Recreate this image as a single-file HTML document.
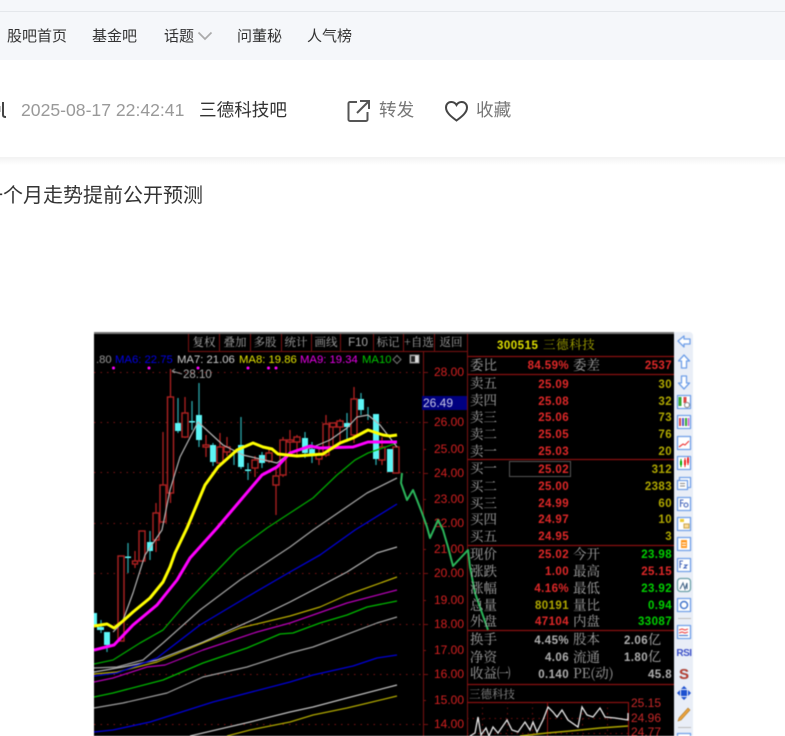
<!DOCTYPE html>
<html lang="zh"><head><meta charset="utf-8"><title>三德科技吧</title>
<style>
html,body{margin:0;padding:0;background:#fff}
body{width:785px;height:736px;overflow:hidden;position:relative;font-family:"Liberation Sans","Noto Sans CJK SC",sans-serif}
.t{position:absolute;white-space:nowrap;line-height:1}
#top{position:absolute;left:0;top:0;width:785px;height:60px;background:#f5f7fa}
#top i{position:absolute;left:0;top:11px;width:785px;height:1px;background:#e4e7eb}
.n{font-size:15px;color:#333;top:29px}
.m{font-size:17.6px;top:102px}
#bar{position:absolute;left:0;top:157px;width:785px;height:8px;background:linear-gradient(#f2f2f2,#fff)}
#chart{position:absolute;left:94px;top:332px;width:600px;height:404px;overflow:hidden;filter:blur(.45px)}
</style></head><body>
<div id="top"><i></i></div>
<span class="t n" style="left:7px">股吧首页</span>
<span class="t n" style="left:92px">基金吧</span>
<span class="t n" style="left:164px">话题</span>
<svg style="position:absolute;left:197px;top:31px" width="16" height="10"><path d="M1.5 1.5L8 8l6.500-6.500" fill="none" stroke="#aaa" stroke-width="1.700"/></svg>
<span class="t n" style="left:237px">问董秘</span>
<span class="t n" style="left:307px">人气榜</span>

<svg style="position:absolute;left:0;top:100px" width="8" height="20"><path d="M3 2v13q0 2 3 2" fill="none" stroke="#444" stroke-width="2"/><path d="M0 6v6" stroke="#888" stroke-width="1"/></svg>
<span class="t m" style="left:21px;color:#999">2025-08-17 22:42:41</span>
<span class="t m" style="left:199px;color:#333">三德科技吧</span>
<svg style="position:absolute;left:347px;top:99px" width="24" height="24" fill="none" stroke="#555" stroke-width="2"><path d="M10 3H3a1.500 1.500 0 0 0-1.500 1.500v16A1.500 1.500 0 0 0 3 22h16a1.500 1.500 0 0 0 1.500-1.500V13"/><path d="M10 14L21 3M13 2h9v8"/></svg>
<span class="t m" style="left:379px;color:#777">转发</span>
<svg style="position:absolute;left:444px;top:99px" width="25" height="24" fill="none" stroke="#444" stroke-width="2"><path d="M12.500 21.500C7 17.500 2 13.500 2 8.500 2 5 4.500 3 7.300 3c2.200 0 4 1 5.200 3 1.200-2 3-3 5.200-3C20.500 3 23 5 23 8.500c0 5-5 9-10.500 13z"/></svg>
<span class="t m" style="left:476px;color:#777">收藏</span>
<div id="bar"></div>
<span class="t" style="left:-17px;top:186px;font-size:20px;color:#333;width:240px">一个月走势提前公开预测</span>

<div id="chart">
<svg width="600" height="404" viewBox="94 332 600 404" xmlns="http://www.w3.org/2000/svg" style="display:block">
<rect x="94" y="332" width="580" height="404" fill="#000"/>
<rect x="94" y="332" width="580" height="2" fill="#777"/>
<!-- sidebar -->
<path d="M674 332h15a4 4 0 0 1 4 4v400h-19z" fill="#e9eef7"/>
<!-- grid -->
<g stroke="#7a1414" stroke-width="1" stroke-dasharray="1.500 5" fill="none">
<path d="M94 372.500H423M94 422.500H423M94 472.500H423M94 523.500H423M94 573.500H423M94 624.500H423M94 674.500H423M94 724.500H423"/>
</g>
<!-- frame -->
<g stroke="#7a1212" stroke-width="1" fill="none">
<path d="M188.500 334v17M219.500 334v17M250.500 334v17M281.500 334v17M311.500 334v17M340.500 334v17M373.500 334v17M403.500 334v17M434.500 334v17M467.500 334v402M188 351.500H467M423.500 351V736"/>
<path d="M423 372.500h5M423 397.500h3M423 422.500h5M423 449.500h3M423 473.500h5M423 499.500h3M423 523.500h5M423 549.500h3M423 573.500h5M423 600.500h3M423 624.500h5M423 650.500h3M423 674.500h5M423 700.500h3M423 724.500h5"/>
</g>
<g stroke="#8a1010" stroke-width="1.200" fill="none">
<path d="M467 356.500H674M467 374.500H674M467 459.500H674M467 545.500H674M467 630.500H674M467 684.500H674M467 702.500H628M628.500 702V736"/>
</g>
<path d="M467 718.500H628M467 733.500H628M482.500 702V736M507.500 702V736M532.500 702V736M582.500 702V736M607.500 702V736" stroke="#701010" stroke-dasharray="1.500 4" fill="none"/>
<path d="M547.500 702V736" stroke="#8a1010" fill="none"/>
<g font-family="'Noto Serif CJK SC',serif" font-size="11.500" fill="#a8a8a8" text-anchor="middle">
<text x="204" y="346">复权</text><text x="235" y="346">叠加</text><text x="265" y="346">多股</text><text x="296" y="346">统计</text><text x="326" y="346">画线</text>
<text x="358" y="346" font-family="'Liberation Sans',sans-serif">F10</text><text x="388" y="346">标记</text><text x="419" y="346">+自选</text><text x="451" y="346">返回</text>
</g>
<g font-size="11.300" font-family="'Liberation Sans',sans-serif">
<text x="96" y="363" fill="#999">.80</text><text x="115" y="363" fill="#0000e8">MA6: 22.75</text><text x="177" y="363" fill="#ccc">MA7: 21.06</text><text x="239" y="363" fill="#e4e400">MA8: 19.86</text><text x="300" y="363" fill="#e800e8">MA9: 19.34</text><text x="362" y="363" fill="#00c800">MA10</text>
<path d="M397 355.500l4 4-4 4-4-4z" fill="none" stroke="#777"/>
<rect x="410" y="355" width="9" height="8" fill="#ddd" stroke="#888"/><rect x="411" y="356" width="4" height="6" fill="#222"/>
</g>
<g fill="#f0f" ><circle cx="113.500" cy="368" r="1.500"/><circle cx="149" cy="368" r="1.500"/><circle cx="198" cy="368" r="1.500"/><circle cx="248" cy="368" r="1.500"/><circle cx="268.500" cy="368" r="1.500"/><circle cx="276" cy="368" r="1.500"/></g>
<path d="M172 371l10 3M172 371l3-2M172 371l3 2" stroke="#999" fill="none"/>
<text x="183" y="378" font-size="11.500" fill="#aaa">28.10</text>
<!-- axis labels -->
<g font-size="12" fill="#d42020">
<text x="434" y="376">28.00</text><text x="434" y="426">26.00</text><text x="434" y="453">25.00</text><text x="434" y="477">24.00</text><text x="434" y="503">23.00</text><text x="434" y="527">22.00</text><text x="434" y="553">21.00</text><text x="434" y="577">20.00</text><text x="434" y="604">19.00</text><text x="434" y="628">18.00</text><text x="434" y="654">17.00</text><text x="434" y="678">16.00</text><text x="434" y="704">15.00</text><text x="434" y="728">14.00</text>
</g>
<rect x="422" y="396" width="45" height="14" fill="#000080"/>
<text x="423" y="407" font-size="12" fill="#c8c8e8">26.49</text>
<!-- candles: wicks -->
<g stroke="#b02020" stroke-width="1.300" fill="none">
<path d="M135 551V568M156 503V552M163 432V485M170.500 369V503M185 397V438M206 435V457M220 433V465M227 437V456M255 456V477M269 448V463M276 467V515M283 437V477M290 430V457M297 435V455M319 447V465M326 415V457M333 423V450M340 419V443M354 387V443M382 437V465"/>
</g>
<g stroke="#2aa5a8" stroke-width="1.300" fill="none">
<path d="M101 620V633M107 645V652M128 543V573M150 531V560M178 398V433M192 401V430M199 383V447M213 443V466M234 450V465M241 417V469M248 463V480M262 452V468M305 432V458M312 442V463M347 413V442M361 393V415M368 407V420M376 459V465"/>
</g>
<g fill="#000" stroke="#b02222" stroke-width="1.400">
<rect x="118" y="556" width="6" height="85"/><rect x="132.500" y="561" width="5" height="3"/><rect x="139" y="531" width="6" height="30"/><rect x="153" y="513" width="6" height="27"/><rect x="160" y="485" width="6" height="37"/><rect x="167.500" y="397" width="6" height="96"/><rect x="182" y="413" width="6" height="24"/><rect x="203" y="445" width="6" height="2"/><rect x="217" y="447" width="6" height="16"/><rect x="224" y="447" width="6" height="5"/><rect x="252" y="460" width="6" height="8"/><rect x="266" y="453" width="6" height="8"/><rect x="273" y="476" width="6" height="9"/><rect x="280" y="440" width="6" height="35"/><rect x="287" y="440" width="6" height="2"/><rect x="294" y="437" width="6" height="5"/><rect x="316" y="455" width="6" height="4"/><rect x="323" y="424" width="6" height="31"/><rect x="330" y="423" width="6" height="4"/><rect x="337" y="421" width="6" height="6"/><rect x="351" y="399" width="6" height="36"/><rect x="379" y="447" width="6" height="13"/><rect x="393" y="447" width="6" height="26"/>
</g>
<g fill="#5cf5f5">
<rect x="94" y="613" width="3" height="12"/><rect x="97" y="627" width="7" height="3"/><rect x="104" y="632" width="6" height="13"/><rect x="125" y="556.500" width="6" height="1.500"/><rect x="147" y="542" width="6" height="9"/><rect x="175" y="423" width="6" height="8"/><rect x="189" y="421" width="6" height="1.500"/><rect x="196" y="415" width="6" height="25"/><rect x="210" y="445" width="6" height="17"/><rect x="238" y="445" width="6" height="22"/><rect x="245" y="469.500" width="6" height="1.500"/><rect x="259" y="455" width="6" height="8"/><rect x="302" y="438" width="6" height="15"/><rect x="309" y="449" width="6" height="6"/><rect x="344" y="423" width="6" height="4"/><rect x="358" y="399" width="6" height="11"/><rect x="373" y="414" width="6" height="45"/><rect x="387" y="449" width="6" height="23"/>
</g>
<!-- MA lines -->
<g fill="none" stroke-linejoin="round" stroke-width="1.200">
<polyline stroke="#b8ac00" points="94,674 117,672 157,662 203,643 240,628 290,616 320,607 347,595 397,577"/>
<polyline stroke="#b800b8" points="94,682 113,678 147,667 165,665 203,650 257,632 290,623 313,615 347,603 397,590"/>
<polyline stroke="#00b800" stroke-width="1.300" points="94,697 113,693 163,680 203,663 247,648 280,634 293,633 320,623 347,615 367,607 397,601"/>
<polyline stroke="#a0a0a0" points="94,708 123,703 167,693 203,677 247,667 290,653 313,647 340,637 377,623 397,617"/>
<polyline stroke="#0000d8" stroke-width="1.300" points="94,732 113,730 150,722 213,702 290,682 313,675 353,666 377,658 397,655"/>
<polyline stroke="#c0c0c0" points="190,736 250,722 290,712 313,707 347,698 397,685"/>
<polyline stroke="#b0a800" points="227,736 250,730 290,722 313,715 347,708 368,703 397,696"/>
<polyline stroke="#b4b4b4" points="94,672 123,667 157,660 203,642 257,618 290,602 313,590 347,572 377,553 397,547"/>
<polyline stroke="#0000d8" stroke-width="1.300" points="94,676 117,673 157,658 200,625 247,597 290,572 320,555 355,530 397,504"/>
<polyline stroke="#a0a0a0" stroke-width="1.300" points="94,668 117,667 143,660 163,643 200,610 240,580 290,547 313,530 367,493 397,478"/>
<polyline stroke="#00a800" stroke-width="1.300" points="94,664 113,660 140,643 163,630 187,602 210,578 237,550 267,528 290,513 313,498 337,475 355,460 368,453 397,443"/>
<polyline stroke="#b4b4b4" stroke-width="1.200" points="113,632 122,623 133,593 145,555 162,530 170,490 180,457 198,422 223,445 243,455 277,463 290,453 313,447 330,440 347,428 357,417 368,415 380,425 397,447"/>
<polyline stroke="#f0f" stroke-width="3" points="94,650 114,645 133,625 157,605 177,580 190,558 217,528 262,475 277,467 290,453 310,446 320,448 353,447 368,442 397,442"/>
<polyline stroke="#ff0" stroke-width="3" points="94,626 107,624 114,628 123,621 133,612 150,598 163,582 170,567 175,553 187,528 205,485 218,467 237,450 253,443 263,447 272,449 278,454 297,456 323,454 340,443 353,438 368,430 383,435 390,436 397,435"/>
<polyline stroke="#2bb55a" stroke-width="2" points="402,473 401,483 407,500 413,490 417,500 422,513 427,527 430,538 438,520 443,530 448,547 453,566 468,550 470,567 475,593 488,630"/>
</g>
<!-- right panel -->
<text x="497" y="349" font-size="11.500" font-weight="700" fill="#e0e000" letter-spacing=".5">300515</text>
<text x="543" y="349" font-size="12.500" font-family="'Noto Serif CJK SC',serif" fill="#a8a800" letter-spacing=".6">三德科技</text>
<g font-family="'Noto Serif CJK SC',serif" font-size="13.500" fill="#a5a5a5">
<text x="470" y="370">委比</text><text x="573" y="370">委差</text>
<text x="470" y="388">卖五</text><text x="470" y="405">卖四</text><text x="470" y="422">卖三</text><text x="470" y="439">卖二</text><text x="470" y="456">卖一</text>
<text x="470" y="473">买一</text><text x="470" y="491">买二</text><text x="470" y="508">买三</text><text x="470" y="524">买四</text><text x="470" y="541">买五</text>
<text x="470" y="559">现价</text><text x="470" y="576">涨跌</text><text x="470" y="593">涨幅</text><text x="470" y="610">总量</text><text x="470" y="626">外盘</text>
<text x="573" y="559">今开</text><text x="573" y="576">最高</text><text x="573" y="593">最低</text><text x="573" y="610">量比</text><text x="573" y="626">内盘</text>
<text x="470" y="644">换手</text><text x="470" y="662">净资</text><text x="470" y="678">收益㈠</text>
<text x="573" y="644">股本</text><text x="573" y="662">流通</text><text x="573" y="678">PE(动)</text>
<text x="469" y="698" font-size="11.500" fill="#8c8c8c">三德科技</text>
</g>
<rect x="509.500" y="461.500" width="61" height="15" fill="none" stroke="#555"/>
<g font-size="11.500" font-weight="700" text-anchor="end" letter-spacing=".4">
<g fill="#e02828">
<text x="569" y="369">84.59%</text><text x="672" y="369">2537</text>
<text x="569" y="388">25.09</text><text x="569" y="405">25.08</text><text x="569" y="421">25.06</text><text x="569" y="438">25.05</text><text x="569" y="455">25.03</text>
<text x="569" y="473">25.02</text><text x="569" y="490">25.00</text><text x="569" y="507">24.99</text><text x="569" y="523">24.97</text><text x="569" y="540">24.95</text>
<text x="569" y="558">25.02</text><text x="569" y="575">1.00</text><text x="569" y="592">4.16%</text><text x="569" y="625">47104</text><text x="672" y="575">25.15</text>
</g>
<g fill="#b0a800">
<text x="672" y="388">30</text><text x="672" y="405">32</text><text x="672" y="421">73</text><text x="672" y="438">76</text><text x="672" y="455">20</text>
<text x="672" y="473">312</text><text x="672" y="490">2383</text><text x="672" y="507">60</text><text x="672" y="523">10</text><text x="672" y="540">3</text><text x="569" y="609">80191</text>
</g>
<g fill="#00d000">
<text x="672" y="558">23.98</text><text x="672" y="592">23.92</text><text x="672" y="609">0.94</text><text x="672" y="625">33087</text>
</g>
<g fill="#b0b0b0">
<text x="569" y="644">4.45%</text><text x="569" y="661">4.06</text><text x="569" y="678">0.140</text><text x="672" y="678">45.8</text><text x="648" y="644">2.06</text><text x="648" y="661">1.80</text>
</g>
</g>
<g font-family="'Noto Serif CJK SC',serif" font-size="13" fill="#b0b0b0"><text x="648" y="644">亿</text><text x="648" y="661">亿</text></g>
<g font-size="12" fill="#c82828"><text x="631" y="707">25.15</text><text x="631" y="722">24.96</text><text x="631" y="736">24.77</text></g>
<polyline fill="none" stroke="#e8e8e8" stroke-width="1.300" points="470,736 475,733 478,717 481,735 486,728 489,736 493,727 498,733 507,720 512,730 518,732 525,722 530,730 533,722 537,732 543,720 548,707 553,712 557,717 562,710 568,720 578,727 582,707 587,715 593,717 600,708 605,717 615,718 628,720 628,713"/>
<polyline fill="none" stroke="#b0a800" stroke-width="1.500" points="520,736 547,733 570,731 600,728 628,726"/>
<!-- sidebar icons -->
<g fill="#fff" stroke="#6f9fe8" stroke-width="1.300" stroke-linejoin="round">
<path d="M678 341l6-5v3h6v5h-6v3z"/>
<path d="M684 355l5.500 6h-3v7h-5v-7h-3z"/>
<path d="M684 389l5.500-6h-3v-7h-5v7h-3z"/>
<rect x="677.500" y="395.500" width="13" height="13"/>
<rect x="677.500" y="415.500" width="13" height="13"/>
<rect x="677.500" y="436.500" width="13" height="13"/>
<rect x="677.500" y="456.500" width="13" height="13"/>
<rect x="679.500" y="477.500" width="11" height="10"/><rect x="677.500" y="480.500" width="10" height="9"/>
<rect x="677.500" y="497.500" width="13" height="13"/>
<rect x="677.500" y="517.500" width="13" height="13"/>
<rect x="677.500" y="537.500" width="13" height="13"/>
<rect x="677.500" y="558.500" width="13" height="13"/>
<rect x="677.500" y="578.500" width="13" height="13" rx="3" stroke="#6aa0a8"/>
<rect x="677.500" y="598.500" width="13" height="13"/>
<rect x="677.500" y="625.500" width="13" height="13"/>
<rect x="677.500" y="733.500" width="13" height="8"/>
</g>
<g stroke-width="1.100" fill="none">
<path d="M680 397v9" stroke="#3a3" stroke-width="3"/><path d="M685 397v6" stroke="#d44" stroke-width="3"/><circle cx="687" cy="405" r="2.500" stroke="#888"/>
<path d="M680 418v8" stroke="#d44" stroke-width="2"/><path d="M683 418v8" stroke="#55c" stroke-width="2"/><path d="M686 418v8" stroke="#3a3" stroke-width="2"/><path d="M688.500 418v8" stroke="#c5c" stroke-width="1.500"/>
<path d="M679 447l4-3 2 1 4-4" stroke="#e33"/>
<path d="M681 459v8" stroke="#0a0" stroke-width="1"/><path d="M685 458v9" stroke="#e22" stroke-width="1"/><path d="M688 457v8" stroke="#e22"/><rect x="680" y="461" width="2" height="4" fill="#0a0" stroke="none"/><rect x="684" y="460" width="2" height="5" fill="#e22" stroke="none"/><rect x="687" y="458" width="2" height="5" fill="#e22" stroke="none"/>
<path d="M680 483.500h5M680 486h5" stroke="#888"/>
<path d="M680.500 507v-7h3M680.500 503h3" stroke="#46b"/><circle cx="686" cy="505" r="2" stroke="#46b"/>
<rect x="680" y="519" width="4" height="3" fill="#ec3" stroke="none"/><rect x="684" y="524" width="5" height="4" fill="#fd9" stroke="#ca5"/>
<rect x="681" y="540" width="6" height="8" fill="#f92" stroke="none"/><path d="M682 543h4M682 545.500h4" stroke="#fff"/>
<path d="M680 568v-7h3M680 564h2M684 565h3l-3 3h3" stroke="#46b"/>
<path d="M680 589l3-6 2 6 2-6v6" stroke="#468"/>
<circle cx="684" cy="605" r="3.500" stroke="#47c" stroke-width="1.500"/>
<path d="M679 630l3-1 3 1 3-1M679 633l3-1 3 1 3-1" stroke="#e44"/><path d="M679 635.500h9" stroke="#47c"/>
<path d="M678 618.500h13M678 727.500h13" stroke="#bbb" stroke-width="1"/>
</g>
<text x="684" y="656" text-anchor="middle" font-size="10" font-weight="700" fill="#3c50c8" letter-spacing="-.5">RSI</text>
<text x="684" y="679" text-anchor="middle" font-size="15" font-weight="700" fill="#c0392b" stroke="#888" stroke-width=".3">S</text>
<g fill="#1c50d0"><path d="M684 686l3 3h-6zM684 700l3-3h-6zM677 693l3-3v6zM691 693l-3-3v6z"/><rect x="681" y="690" width="6" height="6"/></g>
<path d="M679 718l9-10 2 2-9 10-3 1z" fill="#eda23c" stroke="#a87a2a" stroke-width=".6"/>
</svg>
</div>
</body></html>
